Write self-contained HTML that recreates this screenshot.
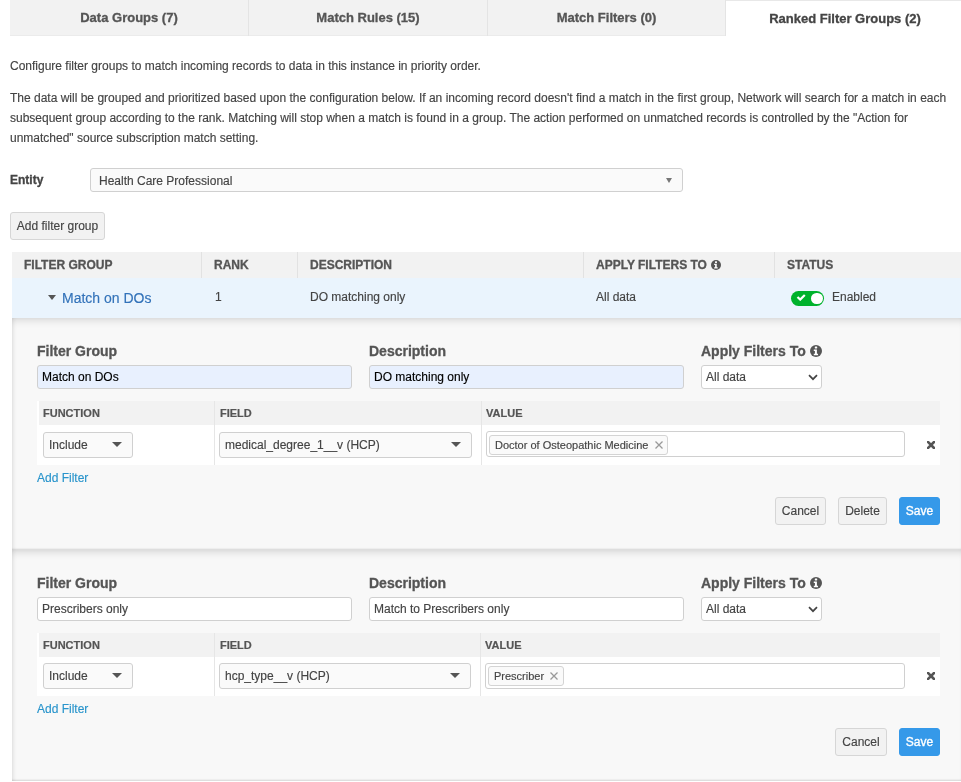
<!DOCTYPE html>
<html><head><meta charset="utf-8">
<style>
*{box-sizing:border-box;margin:0;padding:0}
html,body{width:961px;height:782px;overflow:hidden;background:#fff}
body{will-change:transform;-webkit-text-stroke:.15px currentColor}
.tab,.hdr .c,.lbl,.bold{-webkit-text-stroke:.3px currentColor}
.ftab .hc{-webkit-text-stroke:.2px currentColor}
body{font-family:"Liberation Sans",sans-serif;font-size:12px;color:#444;position:relative}
.a{position:absolute;white-space:nowrap;line-height:20px}
.tab{position:absolute;top:0;height:36px;background:#f2f2f2;border-right:1px solid #e4e4e4;box-shadow:inset 0 -1px 0 #ebebeb;font-weight:bold;font-size:13px;color:#555;text-align:center;line-height:36px}
.tab.act{background:#fff;border-top:1px solid #e8e8e8;border-right:0;box-shadow:none;line-height:35px;color:#444}
.hdr{position:absolute;left:12px;width:949px;top:252px;height:26px;background:#f2f2f2}
.hdr .c{position:absolute;top:0;height:26px;line-height:26px;font-weight:bold;color:#555;font-size:12px}
.hdr .b{position:absolute;top:0;width:1px;height:26px;background:#e2e2e2}
.row{position:absolute;left:12px;width:949px;top:278px;height:40px;background:#eaf4fd}
.panel{position:absolute;left:12px;width:952px;background:#f8f8f8;box-shadow:inset 0 6px 8px -4px rgba(0,0,0,.14),inset 3px 0 4px -2px rgba(0,0,0,.09),inset -3px 0 4px -2px rgba(0,0,0,.09),inset 0 -2px 2px -1px rgba(0,0,0,.12)}
.lbl{position:absolute;font-size:14px;font-weight:bold;color:#555;line-height:20px;white-space:nowrap}
.inp{position:absolute;height:24px;border:1px solid #d0d0d0;border-radius:3px;background:#fff;color:#444;padding-left:4px;line-height:22px;white-space:nowrap}
.inp.af{background:#e8f0fe;color:#000}
.ftab{position:absolute;left:37px;width:903px;background:#fff}
.ftab .h{position:absolute;left:2px;right:0;top:0;height:24px;background:#f2f2f2}
.ftab .hc{position:absolute;top:0;height:24px;line-height:24px;font-size:11px;font-weight:bold;color:#555}
.ftab .vb{position:absolute;top:0;width:1px;bottom:0;background:#e6e6e6}
.sel{position:absolute;height:26px;border:1px solid #d0d0d0;border-radius:3px;background:#fafafa;color:#444;line-height:24px;padding-left:5px;white-space:nowrap}
.tri{position:absolute;width:0;height:0;border-left:5px solid transparent;border-right:5px solid transparent;border-top:5px solid #555}
.tag{position:absolute;height:20px;border:1px solid #d4d4d4;border-radius:3px;background:#fafafa;color:#444;font-size:11px;line-height:18px;padding-left:5px;white-space:nowrap}
.xg{position:absolute}
.link{position:absolute;color:#2a95cc;line-height:20px;white-space:nowrap}
.btn{position:absolute;height:28px;border:1px solid #d6d6d6;border-radius:3px;background:#f2f2f2;color:#444;text-align:center;line-height:26px;white-space:nowrap}
.btn.pri{background:#3599e9;border-color:#3599e9;color:#fff;-webkit-text-stroke:.35px #fff}
</style></head><body>

<!-- tabs -->
<div class="tab" style="left:10px;width:239px">Data Groups (7)</div>
<div class="tab" style="left:249px;width:239px">Match Rules (15)</div>
<div class="tab" style="left:488px;width:238px">Match Filters (0)</div>
<div class="tab act" style="left:726px;width:238px">Ranked Filter Groups (2)</div>

<div class="a" style="left:10px;top:56px">Configure filter groups to match incoming records to data in this instance in priority order.</div>
<div class="a" style="left:10px;top:88px;white-space:normal;width:945px">The data will be grouped and prioritized based upon the configuration below. If an incoming record doesn't find a match in the first group, Network will search for a match in each subsequent group according to the rank. Matching will stop when a match is found in a group. The action performed on unmatched records is controlled by the "Action for unmatched" source subscription match setting.</div>

<div class="a bold" style="left:10px;top:170px;font-weight:bold;color:#444">Entity</div>
<div class="sel" style="left:90px;top:168px;width:593px;height:24px;line-height:24px;padding-left:8px">Health Care Professional</div>
<div class="tri" style="left:666px;top:178px;border-left-width:3.8px;border-right-width:3.8px;border-top-width:5px;border-top-color:#777"></div>

<div class="btn" style="left:10px;top:212px;width:95px">Add filter group</div>

<!-- table header -->
<div class="hdr">
  <div class="c" style="left:12px">FILTER GROUP</div>
  <div class="b" style="left:189px"></div>
  <div class="c" style="left:202px">RANK</div>
  <div class="b" style="left:285px"></div>
  <div class="c" style="left:298px">DESCRIPTION</div>
  <div class="b" style="left:571px"></div>
  <div class="c" style="left:584px">APPLY FILTERS TO</div>
  <div class="b" style="left:762px"></div>
  <div class="c" style="left:775px">STATUS</div>
  <svg style="position:absolute;left:699px;top:8px" width="10" height="10" viewBox="0 0 20 20"><circle cx="10" cy="10" r="10" fill="#555"/><rect x="8" y="2.7" width="4" height="3.1" rx=".7" fill="#fff"/><path d="M6.3 7.3h5.2v7.1h1.9v2.7H6.3v-2.7h1.9v-4.4H6.3z" fill="#fff"/></svg>
</div>
<div class="row">
  <div class="tri" style="left:36px;top:16.5px;border-left-width:4.5px;border-right-width:4.5px;border-top-width:5px;border-top-color:#555"></div>
  <div class="a" style="left:50px;top:10px;font-size:14px;color:#3272b9">Match on DOs</div>
  <div class="a" style="left:203px;top:9px">1</div>
  <div class="a" style="left:298px;top:9px">DO matching only</div>
  <div class="a" style="left:584px;top:9px">All data</div>
  <div style="position:absolute;left:779px;top:13px;width:33px;height:15px;border-radius:8px;background:#00b22c"></div>
  <div style="position:absolute;left:799px;top:14.5px;width:11.5px;height:11.5px;border-radius:6px;background:#fff"></div>
  <svg style="position:absolute;left:784px;top:15px" width="10" height="8" viewBox="0 0 10 8"><polyline points="1.5,4 4.2,6.6 8.8,2" fill="none" stroke="#fff" stroke-width="2.2"/></svg>
  <div class="a" style="left:820px;top:9px">Enabled</div>
</div>

<!-- panel 1 -->
<div class="panel" style="top:318px;height:232px">
  <div class="lbl" style="left:25px;top:23px">Filter Group</div>
  <div class="lbl" style="left:357px;top:23px">Description</div>
  <div class="lbl" style="left:689px;top:23px">Apply Filters To</div>
  <svg style="position:absolute;left:798px;top:27px" width="12" height="12" viewBox="0 0 20 20"><circle cx="10" cy="10" r="10" fill="#555"/><rect x="8" y="2.7" width="4" height="3.1" rx=".7" fill="#fff"/><path d="M6.3 7.3h5.2v7.1h1.9v2.7H6.3v-2.7h1.9v-4.4H6.3z" fill="#fff"/></svg>
  <div class="inp af" style="left:25px;top:47px;width:315px">Match on DOs</div>
  <div class="inp af" style="left:357px;top:47px;width:315px">DO matching only</div>
  <div class="inp" style="left:689px;top:47px;width:121px;background:#fff">All data</div>
  <svg style="position:absolute;left:796px;top:56px" width="10" height="7" viewBox="0 0 10 7"><polyline points="1,1.2 5,5.2 9,1.2" fill="none" stroke="#444" stroke-width="1.7"/></svg>
  <div class="ftab" style="left:25px;top:83px;height:64px">
    <div class="h"></div>
    <div class="hc" style="left:6px">FUNCTION</div>
    <div class="vb" style="left:177px"></div>
    <div class="hc" style="left:183px">FIELD</div>
    <div class="vb" style="left:444px"></div>
    <div class="hc" style="left:449px">VALUE</div>
    <div class="sel" style="left:6px;top:31px;width:90px;height:26px">Include</div>
    <div class="tri" style="left:75px;top:41px"></div>
    <div class="sel" style="left:182px;top:31px;width:253px;height:26px">medical_degree_1__v (HCP)</div>
    <div class="tri" style="left:414px;top:41px"></div>
    <div class="inp" style="left:449px;top:30px;width:419px;height:26px"></div>
    <div class="tag" style="left:452px;top:34px;width:179px">Doctor of Osteopathic Medicine</div>
    <svg style="position:absolute;left:618px;top:40px" width="8" height="8" viewBox="0 0 8 8"><path d="M.5 .5L7.5 7.5M7.5 .5L.5 7.5" stroke="#999" stroke-width="1.3"/></svg>
    <svg style="position:absolute;left:890px;top:40px" width="8" height="8" viewBox="0 0 8 8"><path d="M1 1L7 7M7 1L1 7" stroke="#555" stroke-width="2.6" stroke-linecap="square"/></svg>
  </div>
  <div class="link" style="left:25px;top:150px">Add Filter</div>
  <div class="btn" style="left:763px;top:179px;width:51px">Cancel</div>
  <div class="btn" style="left:826px;top:179px;width:49px">Delete</div>
  <div class="btn pri" style="left:887px;top:179px;width:41px">Save</div>
</div>

<!-- panel 2 -->
<div class="panel" style="top:550px;height:231px">
  <div class="lbl" style="left:25px;top:23px">Filter Group</div>
  <div class="lbl" style="left:357px;top:23px">Description</div>
  <div class="lbl" style="left:689px;top:23px">Apply Filters To</div>
  <svg style="position:absolute;left:798px;top:27px" width="12" height="12" viewBox="0 0 20 20"><circle cx="10" cy="10" r="10" fill="#555"/><rect x="8" y="2.7" width="4" height="3.1" rx=".7" fill="#fff"/><path d="M6.3 7.3h5.2v7.1h1.9v2.7H6.3v-2.7h1.9v-4.4H6.3z" fill="#fff"/></svg>
  <div class="inp" style="left:25px;top:47px;width:315px">Prescribers only</div>
  <div class="inp" style="left:357px;top:47px;width:315px">Match to Prescribers only</div>
  <div class="inp" style="left:689px;top:47px;width:121px">All data</div>
  <svg style="position:absolute;left:796px;top:56px" width="10" height="7" viewBox="0 0 10 7"><polyline points="1,1.2 5,5.2 9,1.2" fill="none" stroke="#444" stroke-width="1.7"/></svg>
  <div class="ftab" style="left:25px;top:83px;height:63px">
    <div class="h"></div>
    <div class="hc" style="left:6px">FUNCTION</div>
    <div class="vb" style="left:177px"></div>
    <div class="hc" style="left:183px">FIELD</div>
    <div class="vb" style="left:443px"></div>
    <div class="hc" style="left:448px">VALUE</div>
    <div class="sel" style="left:6px;top:30px;width:90px;height:26px">Include</div>
    <div class="tri" style="left:75px;top:40px"></div>
    <div class="sel" style="left:182px;top:30px;width:252px;height:26px">hcp_type__v (HCP)</div>
    <div class="tri" style="left:413px;top:40px"></div>
    <div class="inp" style="left:448px;top:30px;width:420px;height:26px"></div>
    <div class="tag" style="left:451px;top:33px;width:76px">Prescriber</div>
    <svg style="position:absolute;left:513px;top:39px" width="8" height="8" viewBox="0 0 8 8"><path d="M.5 .5L7.5 7.5M7.5 .5L.5 7.5" stroke="#999" stroke-width="1.3"/></svg>
    <svg style="position:absolute;left:890px;top:39px" width="8" height="8" viewBox="0 0 8 8"><path d="M1 1L7 7M7 1L1 7" stroke="#555" stroke-width="2.6" stroke-linecap="square"/></svg>
  </div>
  <div class="link" style="left:25px;top:149px">Add Filter</div>
  <div class="btn" style="left:823px;top:178px;width:52px">Cancel</div>
  <div class="btn pri" style="left:887px;top:178px;width:41px">Save</div>
</div>

</body></html>
